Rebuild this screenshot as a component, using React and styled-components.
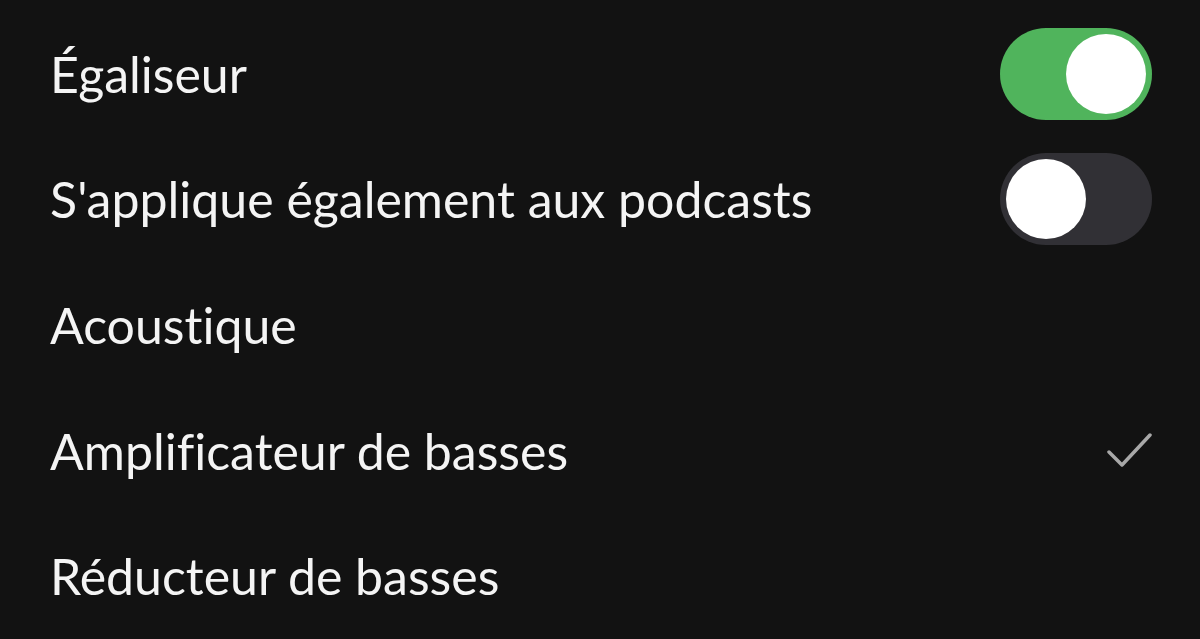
import React from "react";
import styled, { createGlobalStyle } from "styled-components";

const Global = createGlobalStyle`
  html, body { margin: 0; padding: 0; background: #121212; }
  body { font-family: "Lato", "Noto Sans", sans-serif; }
`;

const List = styled.div`
  display: flex;
  flex-direction: column;
  padding: 11px 48px 0 50px;
  background: #121212;
  height: 639px;
  box-sizing: border-box;
`;

const Row = styled.div`
  display: flex;
  align-items: center;
  justify-content: space-between;
  height: 126px;
`;

const Label = styled.span`
  color: #f4f4f4;
  font-size: 50px;
  font-variant-ligatures: none;
  letter-spacing: 0;
`;

const Track = styled.div`
  width: 152px;
  height: 92px;
  border-radius: 46px;
  box-sizing: border-box;
  padding: 6px;
  display: flex;
  justify-content: ${(p) => (p.$on ? "flex-end" : "flex-start")};
  align-items: center;
  background: ${(p) => (p.$on ? "#50b45c" : "#313035")};
`;

const Knob = styled.div`
  width: 80px;
  height: 80px;
  border-radius: 50%;
  background: #ffffff;
`;

const Check = styled.svg`
  width: 46px;
  height: 36px;
`;

const Toggle = ({ on }) => (
  <Track $on={on}>
    <Knob />
  </Track>
);

export default function App() {
  return (
    <>
      <Global />
      <List>
        <Row>
          <Label>Égaliseur</Label>
          <Toggle on />
        </Row>
        <Row>
          <Label>S'applique également aux podcasts</Label>
          <Toggle />
        </Row>
        <Row>
          <Label>Acoustique</Label>
        </Row>
        <Row>
          <Label>Amplificateur de basses</Label>
          <Check viewBox="0 0 46 36">
            <path d="M3 19 L16 32 L44 2" fill="none" stroke="#a8a8a8" strokeWidth="3.5" strokeLinecap="round" strokeLinejoin="round" />
          </Check>
        </Row>
        <Row>
          <Label>Réducteur de basses</Label>
        </Row>
      </List>
    </>
  );
}
